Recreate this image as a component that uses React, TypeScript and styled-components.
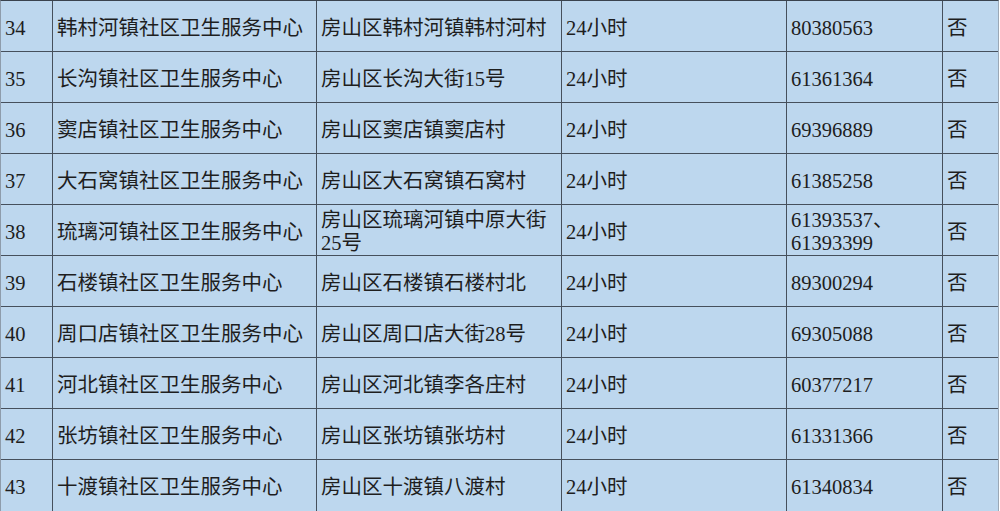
import styled, {createGlobalStyle} from "styled-components";

const GlobalStyle = createGlobalStyle`
  html, body {
    margin: 0;
    padding: 0;
    background: #ffffff;
  }
`

type Row = {
    no: string
    name: string
    address: React.ReactNode
    hours: string
    phone: React.ReactNode
    flag: string
}

const rows: Row[] = [
    {no: '34', name: '韩村河镇社区卫生服务中心', address: '房山区韩村河镇韩村河村', hours: '24小时', phone: '80380563', flag: '否'},
    {no: '35', name: '长沟镇社区卫生服务中心', address: '房山区长沟大街15号', hours: '24小时', phone: '61361364', flag: '否'},
    {no: '36', name: '窦店镇社区卫生服务中心', address: '房山区窦店镇窦店村', hours: '24小时', phone: '69396889', flag: '否'},
    {no: '37', name: '大石窝镇社区卫生服务中心', address: '房山区大石窝镇石窝村', hours: '24小时', phone: '61385258', flag: '否'},
    {
        no: '38', name: '琉璃河镇社区卫生服务中心',
        address: <>房山区琉璃河镇中原大街<br/>25号</>,
        hours: '24小时',
        phone: <>61393537、<br/>61393399</>,
        flag: '否'
    },
    {no: '39', name: '石楼镇社区卫生服务中心', address: '房山区石楼镇石楼村北', hours: '24小时', phone: '89300294', flag: '否'},
    {no: '40', name: '周口店镇社区卫生服务中心', address: '房山区周口店大街28号', hours: '24小时', phone: '69305088', flag: '否'},
    {no: '41', name: '河北镇社区卫生服务中心', address: '房山区河北镇李各庄村', hours: '24小时', phone: '60377217', flag: '否'},
    {no: '42', name: '张坊镇社区卫生服务中心', address: '房山区张坊镇张坊村', hours: '24小时', phone: '61331366', flag: '否'},
    {no: '43', name: '十渡镇社区卫生服务中心', address: '房山区十渡镇八渡村', hours: '24小时', phone: '61340834', flag: '否'},
]

const App = () => {
    return (
        <>
            <GlobalStyle/>
            <Sheet>
                {rows.map(r => (
                    <Line key={r.no}>
                        <Cell>{r.no}</Cell>
                        <Cell>{r.name}</Cell>
                        <Cell>{r.address}</Cell>
                        <Cell>{r.hours}</Cell>
                        <Cell>{r.phone}</Cell>
                        <Cell>{r.flag}</Cell>
                    </Line>
                ))}
            </Sheet>
        </>
    )
}

const Sheet = styled.div`
  width: 997px;
  height: 510px;
  display: grid;
  grid-template-rows: repeat(9, 50px) 1fr;
  row-gap: 1px;
  background: #46505c;
  border-top: 1px solid #3a434e;
  border-left: 1px solid #8e9cab;
  border-right: 1px solid #9aa8b6;
  box-sizing: content-box;
  overflow: hidden;
`
const Line = styled.div`
  display: grid;
  grid-template-columns: 51px 263px 244px 224px 155px 55px;
  column-gap: 1px;
`
const Cell = styled.div`
  background: #bdd7ee;
  display: flex;
  flex-direction: column;
  justify-content: center;
  padding: 4px 0 0 4px;
  font-family: "Liberation Serif", "Noto Sans CJK SC", serif;
  font-size: 20.5px;
  line-height: 23px;
  color: #1e1e1e;
  white-space: nowrap;
  overflow: hidden;
`

export default App
